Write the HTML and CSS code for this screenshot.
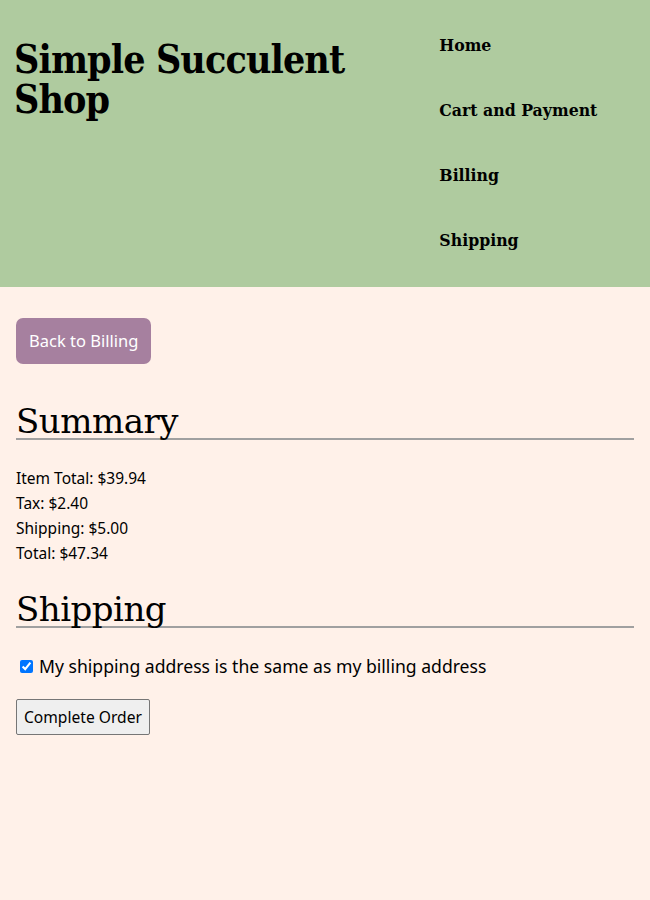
FILE: index.html
```html
<!DOCTYPE html>
<html lang="en">
<head>
<meta charset="utf-8">
<title>Simple Succulent Shop - Shipping</title>
<link rel="stylesheet" href="styles.css">
</head>
<body>
<header class="site-header">
  <h1 class="site-title">Simple Succulent Shop</h1>
  <nav class="site-nav">
    <a class="nav-link" href="#">Home</a>
    <a class="nav-link" href="#">Cart and Payment</a>
    <a class="nav-link" href="#">Billing</a>
    <a class="nav-link" href="#">Shipping</a>
  </nav>
</header>
<main class="content">
  <a class="back-btn" href="#">Back to Billing</a>
  <h2 class="section-title">Summary</h2>
  <div class="summary">
    <div>Item Total: $39.94</div>
    <div>Tax: $2.40</div>
    <div>Shipping: $5.00</div>
    <div>Total: $47.34</div>
  </div>
  <h2 class="section-title">Shipping</h2>
  <label class="same-address"><input class="check" type="checkbox" checked> My shipping address is the same as my billing address</label>
  <button class="complete-btn" type="button">Complete Order</button>
</main>
</body>
</html>
```

FILE: styles.css
```css
html, body {
  margin: 0;
  padding: 0;
}
body {
  background: #fff1e9;
  font-family: "Noto Sans", sans-serif;
  color: #000;
  min-height: 900px;
}
.site-header {
  background: #afcb9f;
  display: grid;
  grid-template-columns: 2fr 1fr;
  padding: 13px 0;
  box-sizing: border-box;
  height: 287px;
}
.site-title {
  font-family: "DejaVu Serif Condensed", "DejaVu Serif", serif;
  font-stretch: condensed;
  font-weight: bold;
  font-size: 39px;
  line-height: 40px;
  margin: 26px 0 0 14px;
  letter-spacing: -0.9px;
}
.site-nav {
  display: flex;
  flex-direction: column;
  padding-left: 6px;
}
.nav-link {
  font-family: "DejaVu Serif Condensed", "DejaVu Serif", serif;
  font-stretch: condensed;
  font-weight: bold;
  font-size: 17.5px;
  line-height: 25px;
  padding: 20px 0;
  color: #000;
  text-decoration: none;
}
.content {
  padding: 31px 16px 16px;
  display: flex;
  flex-direction: column;
  align-items: flex-start;
}
.back-btn {
  background: #a6809f;
  color: #fff;
  text-decoration: none;
  font-size: 16.5px;
  line-height: 20px;
  padding: 13px 13px;
  border-radius: 7px;
}
.section-title {
  align-self: stretch;
  font-family: "DejaVu Serif", serif;
  font-weight: normal;
  font-size: 34px;
  line-height: 34px;
  margin: 40px 0 0;
  border-bottom: 2px solid #a0a0a0;
  letter-spacing: -0.5px;
}
.summary {
  margin-top: 26px;
  font-size: 15.5px;
  line-height: 25px;
}
.summary + .section-title {
  margin-top: 26px;
}
.same-address {
  margin-top: 26px;
  font-size: 17.6px;
  line-height: 24px;
  display: flex;
  align-items: center;
  gap: 6px;
}
.check {
  margin: 0 0 0 4px;
  width: 13px;
  height: 13px;
}
.complete-btn {
  margin-top: 21px;
  font-family: "Noto Sans", sans-serif;
  font-size: 15.6px;
  padding: 6px 7px;
  border: 1px solid #767676;
  border-radius: 2px;
  background: #efefef;
  color: #000;
}
```
